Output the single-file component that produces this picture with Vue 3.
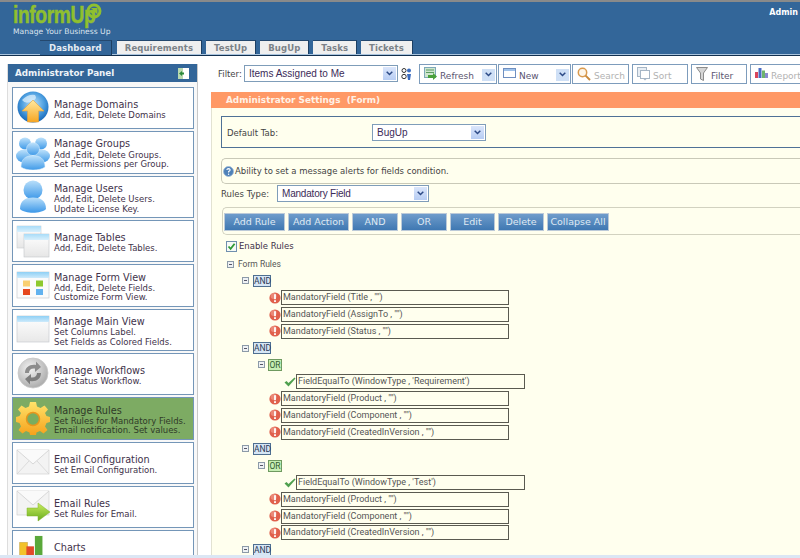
<script setup>
const tabs = ['Requirements', 'TestUp', 'BugUp', 'Tasks', 'Tickets']

const items = [
  { icon: 'globe', title: 'Manage Domains', lines: ['Add, Edit, Delete Domains'] },
  { icon: 'groups', title: 'Manage Groups', lines: ['Add ,Edit, Delete Groups.', 'Set Permissions per Group.'] },
  { icon: 'user', title: 'Manage Users', lines: ['Add, Edit, Delete Users.', 'Update License Key.'] },
  { icon: 'tables', title: 'Manage Tables', lines: ['Add, Edit, Delete Tables.'] },
  { icon: 'form', title: 'Manage Form View', lines: ['Add, Edit, Delete Fields.', 'Customize Form View.'] },
  { icon: 'main', title: 'Manage Main View', lines: ['Set Columns Label.', 'Set Fields as Colored Fields.'] },
  { icon: 'flow', title: 'Manage Workflows', lines: ['Set Status Workflow.'] },
  { icon: 'gear', title: 'Manage Rules', lines: ['Set Rules for Mandatory Fields.', 'Email notification. Set values.'], active: true },
  { icon: 'mail', title: 'Email Configuration', lines: ['Set Email Configuration.'] },
  { icon: 'mailgo', title: 'Email Rules', lines: ['Set Rules for Email.'] },
  { icon: 'chart', title: 'Charts', lines: ['\u00a0'] }
]

const tools = [
  { label: 'Refresh', icon: 'refresh', w: 78, drop: true },
  { label: 'New', icon: 'new', w: 73, drop: true },
  { label: 'Search', icon: 'search', w: 57, off: true },
  { label: 'Sort', icon: 'sort', w: 56, off: true, gap: true },
  { label: 'Filter', icon: 'filter', w: 56, gap: true },
  { label: 'Report', icon: 'report', w: 60, off: true, gap: true }
]

const actions = [
  { label: 'Add Rule', w: 61 },
  { label: 'Add Action', w: 61 },
  { label: 'AND', w: 46 },
  { label: 'OR', w: 46 },
  { label: 'Edit', w: 45 },
  { label: 'Delete', w: 46 },
  { label: 'Collapse All', w: 62 }
]

const m = (f) => ({ kind: 'rule', text: `MandatoryField (${f} , "")` })
const tree = [
  { kind: 'and' }, m('Title'), m('AssignTo'), m('Status'),
  { kind: 'and' }, { kind: 'or' },
  { kind: 'cond', text: "FieldEqualTo (WindowType , 'Requirement')" },
  m('Product'), m('Component'), m('CreatedInVersion'),
  { kind: 'and' }, { kind: 'or' },
  { kind: 'cond', text: "FieldEqualTo (WindowType , 'Test')" },
  m('Product'), m('Component'), m('CreatedInVersion'),
  { kind: 'and' }
]
</script>

<template>
  <div class="page">
    <header class="head">
      <div class="head-top">
        <div class="brand">
          <div class="logo">
            <span class="logo-word">informUp</span>
            <svg class="logo-mark" viewBox="0 0 16 16" width="16" height="16">
              <circle cx="8" cy="8" r="6" fill="none" stroke="#8fbf2f" stroke-width="3" />
              <path d="M5 5 H11.5 V11.5 L9.4 9.4 L7 11.5 L4.8 9.2 L7 7 Z" fill="#8fbf2f" />
            </svg>
          </div>
          <div class="tagline">Manage Your Business Up</div>
        </div>
        <div class="admin">Admin</div>
      </div>
      <nav class="tabs">
        <div class="tab tab-on">Dashboard</div>
        <div v-for="t in tabs" :key="t" class="tab">{{ t }}</div>
      </nav>
    </header>

    <div class="body">
      <aside class="panel">
        <div class="panel-head">
          <span>Administrator Panel</span>
          <svg class="panel-ico" width="11" height="11" viewBox="0 0 11 11">
            <rect width="11" height="11" fill="#fff" />
            <rect width="5" height="11" fill="#b9d9b0" />
            <path d="M1 5.5 L4 3 V4.5 H6 V6.5 H4 V8 Z" fill="#2c8a3c" />
          </svg>
        </div>
        <div class="menu">
          <div v-for="it in items" :key="it.title" class="item" :class="{ 'item-on': it.active }">
            <div class="item-ico">
              <svg v-if="it.icon === 'globe'" viewBox="0 0 34 34" width="34" height="34">
                <defs>
                  <radialGradient id="gl" cx="50%" cy="40%" r="60%">
                    <stop offset="0" stop-color="#bfe3fa" /><stop offset=".6" stop-color="#4d9fe0" /><stop offset="1" stop-color="#1667b8" />
                  </radialGradient>
                  <linearGradient id="ar" x1="0" y1="0" x2="0" y2="1">
                    <stop offset="0" stop-color="#ffe9a0" /><stop offset="1" stop-color="#f6a623" />
                  </linearGradient>
                </defs>
                <circle cx="17" cy="16" r="15.5" fill="url(#gl)" />
                <path d="M6 9 Q12 3 19 4 Q22 8 16 10 Q10 14 6 9 Z" fill="#e4f3fd" opacity=".7" />
                <path d="M17 9 L28 20 H22.5 V31 H11.5 V20 H6 Z" fill="url(#ar)" stroke="#e8a33a" stroke-width=".6" />
              </svg>

              <svg v-else-if="it.icon === 'groups'" viewBox="0 0 34 34" width="34" height="34">
                <defs>
                  <linearGradient id="pb" x1="0" y1="0" x2="0" y2="1">
                    <stop offset="0" stop-color="#bfe2fb" /><stop offset="1" stop-color="#3f9ae8" />
                  </linearGradient>
                </defs>
                <circle cx="9" cy="7.5" r="6" fill="url(#pb)" />
                <circle cx="25" cy="7.5" r="6" fill="url(#pb)" />
                <ellipse cx="8" cy="20" rx="8" ry="6.5" fill="url(#pb)" />
                <ellipse cx="26" cy="20" rx="8" ry="6.5" fill="url(#pb)" />
                <circle cx="17" cy="13" r="6.5" fill="url(#pb)" stroke="#d6ecfc" stroke-width=".5" />
                <path d="M5 31 C5 22 11 19.5 17 19.5 C23 19.5 29 22 29 31 C24 35 10 35 5 31 Z" fill="url(#pb)" stroke="#d6ecfc" stroke-width=".5" />
              </svg>

              <svg v-else-if="it.icon === 'user'" viewBox="0 0 34 34" width="34" height="34">
                <defs>
                  <linearGradient id="pu" x1="0" y1="0" x2="0" y2="1">
                    <stop offset="0" stop-color="#b9dffa" /><stop offset="1" stop-color="#3b97e8" />
                  </linearGradient>
                </defs>
                <circle cx="17" cy="10" r="9.5" fill="url(#pu)" />
                <path d="M4 29 C4 20 10 17.5 17 17.5 C24 17.5 30 20 30 29 C25 34 9 34 4 29 Z" fill="url(#pu)" />
              </svg>

              <svg v-else-if="it.icon === 'tables'" viewBox="0 0 34 34" width="34" height="34">
                <defs>
                  <linearGradient id="tb" x1="0" y1="0" x2="0" y2="1">
                    <stop offset="0" stop-color="#a9dcf8" /><stop offset="1" stop-color="#d9f0fc" />
                  </linearGradient>
                  <linearGradient id="tw" x1="0" y1="0" x2="0" y2="1">
                    <stop offset="0" stop-color="#fff" /><stop offset="1" stop-color="#e6e6e6" />
                  </linearGradient>
                </defs>
                <rect x="1" y="2" width="24" height="22" fill="url(#tw)" stroke="#c8ccd0" stroke-width=".6" />
                <rect x="1" y="2" width="24" height="6" fill="url(#tb)" />
                <rect x="8" y="10" width="25" height="23" fill="url(#tw)" stroke="#c2c6ca" stroke-width=".6" />
                <rect x="8" y="10" width="25" height="6" fill="url(#tb)" />
              </svg>

              <svg v-else-if="it.icon === 'form'" viewBox="0 0 34 34" width="34" height="34">
                <defs>
                  <linearGradient id="fb" x1="0" y1="0" x2="0" y2="1">
                    <stop offset="0" stop-color="#8fd0f5" /><stop offset="1" stop-color="#cdeafb" />
                  </linearGradient>
                </defs>
                <rect x="1" y="3" width="32" height="26" fill="#fbfbfb" stroke="#c8ccd0" stroke-width=".7" />
                <rect x="1" y="3" width="32" height="6" fill="url(#fb)" />
                <rect x="7" y="11.5" width="7" height="6" fill="#f9cf70" />
                <rect x="20" y="11.5" width="7" height="6" fill="#8ec92f" />
                <rect x="7" y="20" width="7" height="6" fill="#e6481e" />
                <rect x="20" y="20" width="7" height="6" fill="#62b2ef" />
              </svg>

              <svg v-else-if="it.icon === 'main'" viewBox="0 0 34 34" width="34" height="34">
                <defs>
                  <linearGradient id="mb" x1="0" y1="0" x2="0" y2="1">
                    <stop offset="0" stop-color="#8fd0f5" /><stop offset="1" stop-color="#cdeafb" />
                  </linearGradient>
                  <linearGradient id="mw" x1="0" y1="0" x2="0" y2="1">
                    <stop offset="0" stop-color="#fff" /><stop offset="1" stop-color="#e8e8e8" />
                  </linearGradient>
                </defs>
                <rect x="1" y="3" width="32" height="26" fill="url(#mw)" stroke="#c8ccd0" stroke-width=".7" />
                <rect x="1" y="3" width="32" height="6" fill="url(#mb)" />
              </svg>

              <svg v-else-if="it.icon === 'flow'" viewBox="0 0 34 34" width="34" height="34">
                <defs>
                  <radialGradient id="wf" cx="40%" cy="35%" r="70%">
                    <stop offset="0" stop-color="#f4f4f4" /><stop offset="1" stop-color="#a8a8a8" />
                  </radialGradient>
                </defs>
                <circle cx="17" cy="16" r="15" fill="url(#wf)" stroke="#c9c9c9" stroke-width=".8" />
                <path d="M9 16 C9 10 14 7 20 8 L20 4.5 L25 10 L19 15 L19 11.5 C15 11 13 13 13 16 Z" fill="#8c8c8c" />
                <path d="M25 16 C25 22 20 25 14 24 L14 27.5 L9 22 L15 17 L15 20.5 C19 21 21 19 21 16 Z" fill="#7d7d7d" />
              </svg>

              <svg v-else-if="it.icon === 'gear'" viewBox="0 0 34 34" width="34" height="34">
                <defs>
                  <linearGradient id="ge" x1="0" y1="0" x2="0" y2="1">
                    <stop offset="0" stop-color="#ffe36a" /><stop offset="1" stop-color="#f6a21c" />
                  </linearGradient>
                </defs>
                <path d="M14 1 H20 L21 5.5 L24.5 7 L28.5 4.5 L32 8.5 L29 12 L30.5 15 L34 16 V21 L30.5 22 L29 25.5 L31.5 29 L27.5 32.5 L24 30 L20.5 31.5 L20 34 H14 L13.5 31.5 L10 30 L6.5 32.5 L2.5 29 L5 25.5 L3.5 22 L0 21 V16 L3.5 15 L5 12 L2 8.5 L5.5 4.5 L9.5 7 L13 5.5 Z" fill="url(#ge)" transform="translate(0 -1)" />
                <circle cx="17" cy="17" r="6.5" fill="#7aad5f" stroke="#e8961c" stroke-width="1.5" />
              </svg>

              <svg v-else-if="it.icon === 'mail'" viewBox="0 0 34 34" width="34" height="34">
                <rect x="1" y="4" width="32" height="24" fill="#f3f3f3" stroke="#d0d0d0" stroke-width=".7" />
                <path d="M1 28 L13 15 M33 28 L21 15" stroke="#d4d4d4" stroke-width=".8" fill="none" />
                <path d="M1 4 L17 18 L33 4" fill="#fafafa" stroke="#cfcfcf" stroke-width=".8" />
              </svg>

              <svg v-else-if="it.icon === 'mailgo'" viewBox="0 0 34 34" width="34" height="34">
                <defs>
                  <linearGradient id="mg" x1="0" y1="0" x2="0" y2="1">
                    <stop offset="0" stop-color="#c9ec5e" /><stop offset="1" stop-color="#68ac1e" />
                  </linearGradient>
                </defs>
                <rect x="1" y="1" width="32" height="24" fill="#f3f3f3" stroke="#d0d0d0" stroke-width=".7" />
                <path d="M1 1 L17 15 L33 1" fill="#fafafa" stroke="#cfcfcf" stroke-width=".8" />
                <path d="M11 18 H22 V13 L34 22 L22 31 V26 H11 Z" fill="url(#mg)" stroke="#7eb32a" stroke-width=".5" />
              </svg>

              <svg v-else-if="it.icon === 'chart'" viewBox="0 0 36 36" width="36" height="36">
                <rect x="4" y="8" width="8" height="20" fill="#f3c22b" stroke="#b98f14" stroke-width=".5" />
                <rect x="11" y="12" width="8" height="16" fill="#e2492a" />
                <rect x="20" y="1" width="8" height="24" fill="#5aa83a" />
                <rect x="1" y="28" width="20" height="3" fill="#c9c9c9" />
                <circle cx="24" cy="33" r="12" fill="#2f7fd2" />
                <path d="M24 33 V21 A12 12 0 0 0 12 33 Z" fill="#f4a81f" />
              </svg>
            </div>
            <div class="item-text">
              <div class="item-title">{{ it.title }}</div>
              <div v-for="l in it.lines" :key="l" class="item-sub">{{ l }}</div>
            </div>
          </div>
        </div>
      </aside>

      <main class="work">
        <div class="toolbar">
          <span class="filter-label">Filter:</span>
          <div class="select select-filter">
            <span>Items Assigned to Me</span>
            <i class="arrow"><svg width="7" height="5" viewBox="0 0 7 5"><path d="M.7 .7 L3.5 3.5 L6.3 .7" fill="none" stroke="#2c4a86" stroke-width="1.5" /></svg></i>
          </div>
          <svg class="people" width="11" height="12" viewBox="0 0 11 12">
            <circle cx="3" cy="2.5" r="2" fill="none" stroke="#333" stroke-width="1" />
            <circle cx="3" cy="8.5" r="2.2" fill="none" stroke="#333" stroke-width="1" />
            <circle cx="8" cy="2.5" r="2" fill="#3b6cc0" />
            <path d="M6 6 H10 L9 12 H7 Z" fill="#3b6cc0" />
          </svg>
          <div class="tools">
            <div v-for="b in tools" :key="b.label" class="tool" :class="{ 'tool-off': b.off, 'tool-gap': b.gap }" :style="{ width: b.w + 'px' }">
              <svg v-if="b.icon === 'refresh'" class="tool-ico" width="13" height="14" viewBox="0 0 13 14">
                <rect x=".5" y=".5" width="11" height="10" fill="#cfe6cf" stroke="#7da8b8" />
                <path d="M2 3 H10 M2 5.5 H10" stroke="#5c9c62" />
                <path d="M4 8 H9 V6 L13 9.5 L9 13 V11 H4 Z" fill="#4aa03c" />
              </svg>
              <svg v-else-if="b.icon === 'new'" class="tool-ico" width="13" height="13" viewBox="0 0 13 13">
                <rect x=".5" y="1.5" width="12" height="9" fill="#fff" stroke="#6f8fc0" />
                <rect x="1" y="2" width="11" height="2" fill="#9fc2ea" />
              </svg>
              <svg v-else-if="b.icon === 'search'" class="tool-ico" width="14" height="14" viewBox="0 0 14 14">
                <circle cx="5.5" cy="5.5" r="4.2" fill="#fdf6ea" stroke="#d99a4e" stroke-width="1.5" />
                <path d="M8.6 8.6 L13 13" stroke="#c98a3e" stroke-width="2" />
              </svg>
              <svg v-else-if="b.icon === 'sort'" class="tool-ico" width="13" height="14" viewBox="0 0 13 14">
                <rect x=".5" y=".5" width="9" height="9" fill="#e8eef4" stroke="#a6b6c6" />
                <rect x="3.5" y="3.5" width="9" height="8" fill="#fff" stroke="#a6b6c6" />
                <path d="M6 11.5 L8 13.5 L10 11.5" fill="#a6b6c6" />
              </svg>
              <svg v-else-if="b.icon === 'filter'" class="tool-ico" width="12" height="14" viewBox="0 0 12 14">
                <path d="M.5 .5 H11.5 L7.5 6 V13.5 L4.5 12 V6 Z" fill="#d6d6d6" stroke="#8c8c8c" />
              </svg>
              <svg v-else class="tool-ico" width="13" height="12" viewBox="0 0 13 12">
                <rect y="5" width="3" height="6" fill="#d9455b" />
                <rect x="3.5" y="1" width="3" height="10" fill="#4a6cc4" />
                <rect x="7" y="3.5" width="3" height="7.5" fill="#6db36d" />
                <rect x="10" y="6" width="3" height="5" fill="#8a8ad0" />
              </svg>
              <span class="tool-label">{{ b.label }}</span>
              <i v-if="b.drop" class="tool-drop"><svg width="7" height="5" viewBox="0 0 7 5"><path d="M.7 .7 L3.5 3.5 L6.3 .7" fill="none" stroke="#2c4a86" stroke-width="1.5" /></svg></i>
            </div>
          </div>
        </div>

        <section class="settings">
          <div class="settings-head">Administrator Settings&nbsp; (Form)</div>
          <div class="settings-body">
            <div class="tab-box">
              <span class="tab-label">Default Tab:</span>
              <div class="select select-tab">
                <span>BugUp</span>
                <i class="arrow"><svg width="7" height="5" viewBox="0 0 7 5"><path d="M.7 .7 L3.5 3.5 L6.3 .7" fill="none" stroke="#2c4a86" stroke-width="1.5" /></svg></i>
              </div>
            </div>

            <div class="info">
              <svg width="11" height="11" viewBox="0 0 11 11">
                <circle cx="5.5" cy="5.5" r="5" fill="#4f81b8" stroke="#9db9d6" stroke-width=".8" />
                <path d="M3.8 4 Q4 2.6 5.6 2.6 Q7.3 2.7 7.1 4.1 Q6.9 5 5.6 5.6 V6.6" fill="none" stroke="#fff" stroke-width="1.1" />
                <circle cx="5.6" cy="8.2" r=".7" fill="#fff" />
              </svg>
              <span>Ability to set a message alerts for fields condition.</span>
            </div>

            <div class="rules-type">
              <span class="rules-label">Rules Type:</span>
              <div class="select select-rules">
                <span>Mandatory Field</span>
                <i class="arrow"><svg width="7" height="5" viewBox="0 0 7 5"><path d="M.7 .7 L3.5 3.5 L6.3 .7" fill="none" stroke="#2c4a86" stroke-width="1.5" /></svg></i>
              </div>
            </div>

            <div class="actions">
              <button v-for="a in actions" :key="a.label" class="act" :style="{ width: a.w + 'px' }">{{ a.label }}</button>
            </div>

            <label class="enable">
              <span class="check">
                <svg width="9" height="9" viewBox="0 0 9 9"><path d="M1.5 4.5 L3.6 6.8 L7.6 1.8" fill="none" stroke="#2f9a35" stroke-width="1.8" /></svg>
              </span>
              Enable Rules
            </label>

            <div class="tree">
              <div class="row row-root"><i class="minus"></i><span class="root-text">Form Rules</span></div>
              <div v-for="(r, i) in tree" :key="i" class="row" :class="'row-' + r.kind">
                <template v-if="r.kind === 'and'">
                  <i class="minus"></i><span class="chip chip-and">AND</span>
                </template>
                <template v-else-if="r.kind === 'or'">
                  <i class="minus"></i><span class="chip chip-or">OR</span>
                </template>
                <template v-else-if="r.kind === 'rule'">
                  <svg class="row-ico" width="12" height="12" viewBox="0 0 12 12">
                    <circle cx="6" cy="6" r="5.6" fill="#e0604c" />
                    <circle cx="4.6" cy="4" r="3" fill="#f09a8a" opacity=".7" />
                    <rect x="5.1" y="2.2" width="1.8" height="5" fill="#fff" />
                    <rect x="5.1" y="8.2" width="1.8" height="1.8" fill="#fff" />
                  </svg>
                  <div class="cell">{{ r.text }}</div>
                </template>
                <template v-else>
                  <svg class="row-ico" width="12" height="10" viewBox="0 0 12 10">
                    <path d="M.5 5.5 L2.5 4 L4.5 6 L10.5 .5 L11.5 1.5 L4.5 9.5 Z" fill="#4fa04f" />
                  </svg>
                  <div class="cell">{{ r.text }}</div>
                </template>
              </div>
            </div>
          </div>
        </section>
      </main>
    </div>
    <div class="foot"></div>
  </div>
</template>

<style>
html, body { margin: 0; background: #fff; overflow: hidden; }
</style>

<style scoped>
.page {
  width: 800px;
  height: 558px;
  display: flex;
  flex-direction: column;
  overflow: hidden;
  font-family: "DejaVu Sans", Verdana, sans-serif;
  color: #333;
  background: #fff;
}

/* header */
.head {
  flex: none;
  height: 56px;
  box-sizing: border-box;
  background: #336699;
  border-top: 2px solid #8a8a8a;
  border-bottom: 2px solid #a9c4de;
  display: flex;
  flex-direction: column;
}
.head-top {
  height: 38px;
  flex: none;
  display: flex;
  justify-content: space-between;
}
.brand { padding: 1px 0 0 13px; }
.logo { display: flex; height: 24px; }
.logo-word {
  font-family: "Liberation Sans", Arial, sans-serif;
  font-weight: 700;
  font-size: 23px;
  line-height: 20px;
  height: 20px;
  margin-top: 2px;
  color: #8fbf2f;
  -webkit-text-stroke: .5px #8fbf2f;
  letter-spacing: -.5px;
  width: 72px;
  display: inline-block;
  transform: scaleX(.84);
  transform-origin: left center;
  white-space: nowrap;
}
.logo-mark { margin-left: 1px; }
.tagline {
  font-size: 7.6px;
  line-height: 10px;
  color: #dbe4ee;
}
.admin {
  font-size: 8px;
  font-weight: 700;
  color: #fff;
  padding: 5px 2px 0 0;
  line-height: 11px;
}
.tabs {
  flex: 1;
  display: flex;
  gap: 4px;
  padding-left: 40px;
  border-bottom: 1px solid #12304f;
}
.tab {
  height: 13px;
  line-height: 14px;
  padding: 0 8px;
  font-size: 8.5px;
  font-weight: 700;
  letter-spacing: .1px;
  color: #7b8288;
  background: #efefef;
  border-top: 1px solid #24486e;
  border-right: 1px solid #1c3f63;
}
.tab-on {
  background: #336699;
  color: #e6edf4;
  padding: 0 9px;
  margin-right: 1px;
  height: 14px;
}

.body { flex: 1; min-height: 0; display: flex; overflow: hidden; }

/* side panel */
.panel {
  flex: none;
  width: 191px;
  margin: 8px 0 0 7px;
  box-sizing: border-box;
  background: #f8f8f8;
  border-right: 1px solid #c8c8c8;
  border-left: 1px solid #dddddd;
}
.panel-head {
  height: 18px;
  background: #336699;
  color: #eef3f8;
  font-size: 8.8px;
  font-weight: 700;
  line-height: 18px;
  padding: 0 8px 0 7px;
  display: flex;
  justify-content: space-between;
  align-items: center;
}
.menu {
  padding: 5px 3px 0 4px;
  display: flex;
  flex-direction: column;
  gap: 2px;
}
.item {
  height: 42.35px;
  flex: none;
  box-sizing: border-box;
  border: 1px solid #7496b8;
  background: #fff;
  display: flex;
  align-items: center;
  padding-left: 3px;
  overflow: hidden;
}
.item-on { background: #7dab63; }
.item-ico { width: 34px; height: 36px; flex: none; margin-right: 4px; display: flex; align-items: center; }
.item-text { white-space: nowrap; color: #41324a; padding-top: 2px; }
.item-title { font-size: 9.7px; line-height: 13.5px; }
.item-sub { font-size: 8.5px; line-height: 9.3px; }
.item-on .item-text { color: #2f3a28; }

/* work area */
.work { flex: 1; min-width: 0; padding: 7px 0 0 13px; overflow: hidden; }
.toolbar { display: flex; align-items: center; height: 21px; padding-left: 7px; white-space: nowrap; }
.filter-label { font-size: 8.5px; color: #444; width: 26px; flex: none; }
.select {
  box-sizing: border-box;
  border: 1px solid #7f9db9;
  background: #fff;
  display: flex;
  align-items: center;
  justify-content: space-between;
  font-family: "Liberation Sans", Arial, sans-serif;
  font-size: 10px;
  color: #3b2b58;
  padding: 0 1px 0 4px;
  flex: none;
}
.arrow {
  width: 13px;
  height: calc(100% - 2px);
  background: linear-gradient(#dbe6fb, #b7cdf3);
  display: flex;
  align-items: center;
  justify-content: center;
}
.select-filter { width: 154px; height: 17px; }
.people { margin: 0 0 0 3px; flex: none; }
.tools { display: flex; gap: 1px; margin-left: 7px; flex: none; }
.tool {
  box-sizing: border-box;
  flex: none;
  height: 20px;
  border: 1px solid #7d9cbc;
  background: #fff;
  display: flex;
  align-items: flex-start;
  padding: 2px 0 0 4px;
  position: relative;
  font-size: 9px;
  color: #5a5570;
}
.tool-gap { margin-left: 2px; }
.tool-ico { flex: none; margin-right: 3px; }
.tool-label { margin-top: 4px; line-height: 11px; }
.tool-off { color: #b2b2b2; }
.tool-drop {
  position: absolute;
  right: 1px;
  top: 4px;
  width: 13px;
  height: 12px;
  background: #cfe0f6;
  display: flex;
  align-items: center;
  justify-content: center;
}

.settings { width: 640px; margin-top: 8px; height: 470px; overflow: hidden; }
.settings-head {
  height: 16px;
  background: #ff9966;
  color: #fff2e6;
  font-size: 8.9px;
  font-weight: 700;
  line-height: 16px;
  padding-left: 15px;
}
.settings-body { background: #ffffee; height: 454px; padding: 8px 0 0 9px; border-left: 1px solid #e2e2d2; box-sizing: border-box; }
.tab-box {
  box-sizing: border-box;
  height: 32px;
  border: 1px solid #4f7196;
  display: flex;
  align-items: center;
  padding-left: 5px;
}
.tab-label { width: 145px; flex: none; font-size: 8.5px; color: #444; padding-top: 1px; }
.select-tab { width: 114px; height: 17px; }
.info {
  box-sizing: border-box;
  margin-top: 10px;
  height: 26px;
  border: 1px solid #c9c9b8;
  border-right: 0;
  border-radius: 5px 0 0 5px;
  display: flex;
  align-items: center;
  gap: 1px;
  padding-left: 1px;
  font-size: 8.5px;
  color: #444;
}
.rules-type { display: flex; align-items: center; height: 17px; margin-top: 1px; }
.rules-label { width: 56px; flex: none; font-size: 8.5px; color: #444; }
.select-rules { width: 152px; height: 17px; letter-spacing: -.2px; }
.actions {
  box-sizing: border-box;
  margin: 5px 0 0 1px;
  height: 28px;
  border: 1px solid #d2d2c0;
  border-right: 0;
  border-radius: 5px 0 0 5px;
  padding: 5px 0 0 1px;
  display: flex;
  gap: 3px;
}
.act {
  height: 18px;
  padding: 0;
  flex: none;
  box-sizing: border-box;
  border: 1px solid #bccad8;
  background: linear-gradient(#6f9ccb, #3f78b2);
  color: #dfe9f3;
  font-family: "DejaVu Sans", Verdana, sans-serif;
  font-size: 9.5px;
  line-height: 14px;
  white-space: nowrap;
}
.enable {
  display: flex;
  align-items: center;
  height: 12px;
  margin: 5px 0 0 5px;
  font-size: 8.5px;
  color: #41324a;
}
.check {
  box-sizing: border-box;
  width: 11px;
  height: 11px;
  border: 1px solid #6f8fae;
  background: #f6faf6;
  margin-right: 2px;
  display: flex;
  align-items: center;
  justify-content: center;
}
.tree {
  margin-top: 3.8px;
  font-family: Roboto, "Liberation Sans", Arial, sans-serif;
  font-size: 9px;
  color: #555;
}
.row { height: 16.8px; display: flex; align-items: center; white-space: nowrap; }
.row-root { padding-left: 6px; }
.root-text { font-size: 8.5px; margin-left: 4px; color: #555; }
.row-and { padding-left: 21px; }
.row-or { padding-left: 37px; }
.row-rule { padding-left: 48px; }
.row-cond { padding-left: 63px; }
.minus {
  box-sizing: border-box;
  width: 7px;
  height: 7px;
  border: 1px solid #8c9aa8;
  background: linear-gradient(90deg, transparent 1px, #556 1px, #556 4px, transparent 4px) center / 100% 1px no-repeat, #eef1f4;
  flex: none;
}
.chip {
  box-sizing: border-box;
  margin-left: 4px;
  height: 12px;
  line-height: 10px;
  font-size: 8.5px;
  color: #2d3a55;
  text-align: center;
  border: 1px solid #4f6f90;
}
.chip-and { width: 18px; background: #d6e6f5; }
.chip-or { width: 14px; background: #c6eeb4; border-color: #6f9a60; color: #2f5a2f; margin-left: 3px; }
.row-ico { flex: none; width: 12px; }
.cell {
  box-sizing: border-box;
  width: 228px;
  height: 15px;
  line-height: 13px;
  border: 1px solid #5a5a50;
  padding-left: 1px;
  color: #555;
  background: #ffffee;
  flex: none;
}
.row-cond .cell { width: 229px; }

.foot { flex: none; height: 3px; background: #dbe6f4; }
</style>
